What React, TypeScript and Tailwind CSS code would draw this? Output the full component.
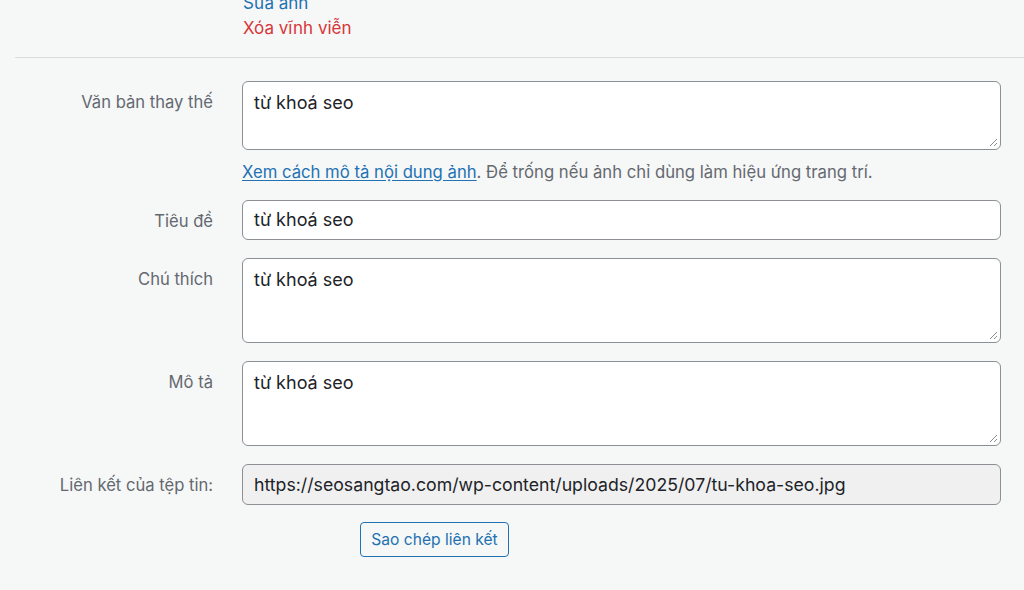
const FONT = "font-['Inter','Noto_Sans',sans-serif]";

function Label({ children }: { children: React.ReactNode }) {
  return (
    <div className="w-[213px] shrink-0 pt-[9px] text-right text-[16.6px] leading-6 text-[#646970]">
      {children}
    </div>
  );
}

function ResizeGrip() {
  return (
    <svg className="absolute bottom-[2px] right-[2px]" width="10" height="10" viewBox="0 0 10 10">
      <path d="M9 2 L2 9 M9 6 L6 9" stroke="#8c8f94" strokeWidth="1" fill="none" />
    </svg>
  );
}

function Area({ value, height }: { value: string; height: string }) {
  return (
    <div
      className={`relative w-full rounded-[6px] border border-[#8c8f94] bg-white px-[11px] pt-[9px] text-[18px] leading-6 text-[#1d2327] ${height}`}
    >
      {value}
      <ResizeGrip />
    </div>
  );
}

function Input({ value, muted }: { value: string; muted?: boolean }) {
  return (
    <div
      className={`flex w-full items-center rounded-[6px] border border-[#8c8f94] px-[11px] leading-6 text-[#1d2327] ${
        muted ? 'h-[41px] bg-[#f0f0f1] text-[17.7px]' : 'h-[40px] bg-white text-[18px]'
      }`}
    >
      {value}
    </div>
  );
}

export default function App() {
  return (
    <div className={`h-[590px] w-[1024px] overflow-hidden bg-[#f6f7f7] ${FONT}`}>
      <div className="-mt-[9px] flex flex-col pl-[243px] text-[17px] leading-[25px]">
        <a className="text-[#2271b1]">Sửa ảnh</a>
        <a className="text-[#d63638]">Xóa vĩnh viễn</a>
      </div>

      <div className="ml-[15px] mt-[16px] h-px bg-[#dcdcde]" />

      <div className="mt-[23px] flex flex-col pr-[23px]">
        <div className="flex gap-[29px]">
          <Label>Văn bản thay thế</Label>
          <div className="flex-1">
            <Area value="từ khoá seo" height="h-[69px]" />
            <p className="mt-3 text-[16.7px] leading-5 text-[#646970]">
              <a className="text-[#2271b1] underline underline-offset-2">Xem cách mô tả nội dung ảnh</a>. Để trống
              nếu ảnh chỉ dùng làm hiệu ứng trang trí.
            </p>
          </div>
        </div>

        <div className="mt-[18px] flex gap-[29px]">
          <Label>Tiêu đề</Label>
          <div className="flex-1">
            <Input value="từ khoá seo" />
          </div>
        </div>

        <div className="mt-[18px] flex gap-[29px]">
          <Label>Chú thích</Label>
          <div className="flex-1">
            <Area value="từ khoá seo" height="h-[85px]" />
          </div>
        </div>

        <div className="mt-[18px] flex gap-[29px]">
          <Label>Mô tả</Label>
          <div className="flex-1">
            <Area value="từ khoá seo" height="h-[85px]" />
          </div>
        </div>

        <div className="mt-[18px] flex gap-[29px]">
          <Label>Liên kết của tệp tin:</Label>
          <div className="flex-1">
            <Input value="https://seosangtao.com/wp-content/uploads/2025/07/tu-khoa-seo.jpg" muted />
          </div>
        </div>

        <div className="mt-[17px] pl-[360px]">
          <button className="h-[35px] w-[149px] rounded-[4px] border border-[#2271b1] bg-[#f6f7f7] text-[15.6px] text-[#2271b1]">
            Sao chép liên kết
          </button>
        </div>
      </div>
    </div>
  );
}
